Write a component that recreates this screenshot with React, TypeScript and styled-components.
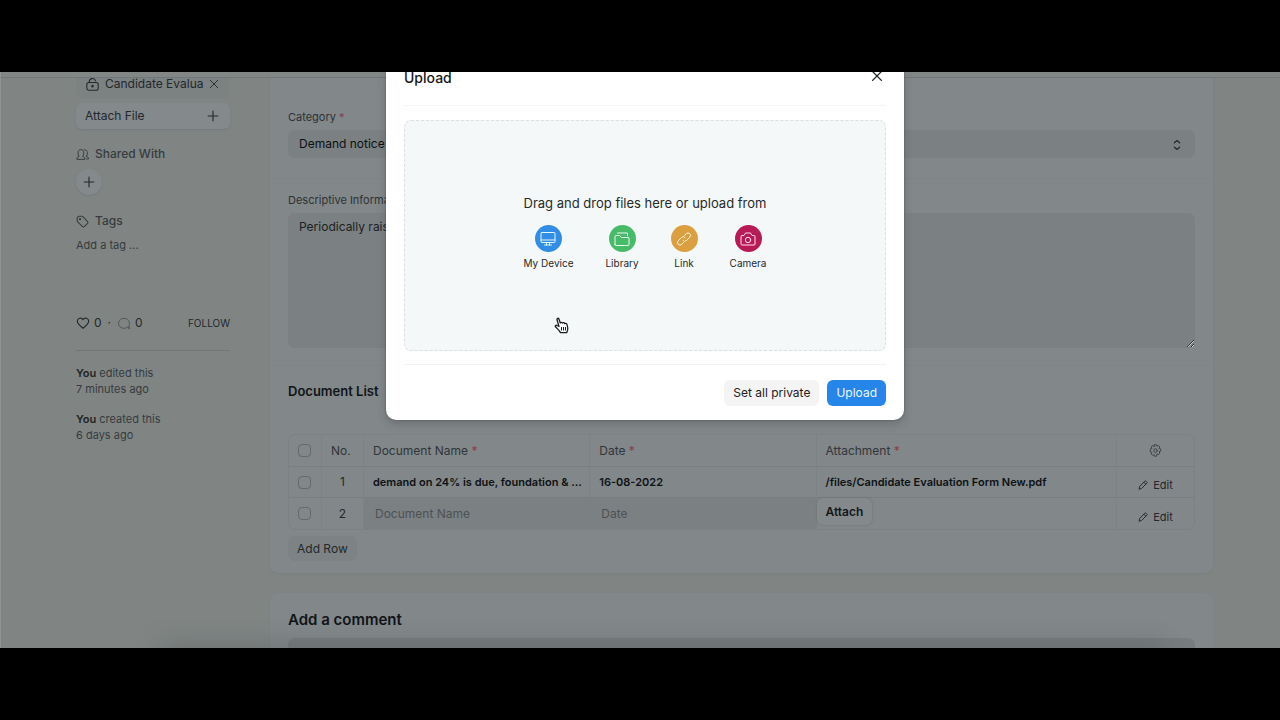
import React from "react";
import styled, { createGlobalStyle } from "styled-components";

const Global = createGlobalStyle`
  *, *::before, *::after { box-sizing: border-box; }
  body { margin: 0; background: #000; font-family: Inter, "Liberation Sans", sans-serif; font-size: 12px; line-height: 16px; color: #23282b; }
  button, input, select, textarea { font: inherit; color: inherit; margin: 0; }
  button { cursor: pointer; }
  h2, h3, p { margin: 0; }
`;

const Screen = styled.div`
  height: 100vh;
  padding: 72px 0;
  display: flex;
  flex-direction: column;
`;
const Stage = styled.div`
  position: relative;
  flex: 1;
  min-height: 0;
  overflow: hidden;
  background: #808584;
  border-left: 1px solid #8f9493;
`;
const Topbar = styled.header`
  height: 6px;
  background: #828786;
  border-bottom: 1px solid #727779;
`;
const Columns = styled.div`
  display: flex;
  gap: 40px;
  padding: 0 67px 0 75px;
`;
const Sidebar = styled.aside`
  flex: 0 0 154px;
  min-width: 0;
  display: flex;
  flex-direction: column;
`;
const AttachedFile = styled.div`
  display: flex;
  align-items: center;
  gap: 6px;
  height: 20px;
  padding: 0 10px 8px;
  margin-bottom: 5px;
  border-radius: 0 0 6px 6px;
  background: #7c8182;
`;
const FileName = styled.a`
  flex: 1;
  min-width: 0;
  color: inherit;
  text-decoration: none;
  white-space: nowrap;
`;
const IconButton = styled.button`
  display: flex;
  padding: 0;
  border: 0;
  background: none;
`;
const AttachButton = styled.button`
  display: flex;
  align-items: center;
  justify-content: space-between;
  height: 26px;
  padding: 0 10px 0 9px;
  border: 0;
  border-radius: 6px;
  background: #84898b;
  box-shadow: 0 1px 2px #737879;
`;
const SideHeading = styled.h3`
  display: flex;
  align-items: center;
  gap: 6px;
  margin-top: 17px;
  font-size: 12px;
  font-weight: 500;
  color: #363c3f;
`;
const RoundButton = styled.button`
  display: flex;
  align-items: center;
  justify-content: center;
  width: 26px;
  height: 26px;
  margin: 7px 0 1px;
  padding: 0;
  border: 0;
  border-radius: 50%;
  background: #84898b;
  box-shadow: 0 1px 2px #737879;
`;
const TagInput = styled.input`
  width: 100%;
  height: 16px;
  margin-top: 8px;
  padding: 0;
  border: 0;
  background: none;
  font-size: 11px;
  &::placeholder { color: #353b3e; opacity: 1; }
`;
const Social = styled.div`
  display: flex;
  align-items: center;
  gap: 4px;
  height: 20px;
  margin-top: 60px;
`;
const Separator = styled.span`
  margin: 0 2px;
`;
const Follow = styled.button`
  margin-left: auto;
  padding: 0;
  border: 0;
  background: none;
  font-size: 10px;
`;
const Rule = styled.hr`
  width: 100%;
  margin: 17px 0 14px;
  border: 0;
  border-top: 1px solid #717677;
`;
const Activity = styled.p`
  margin-bottom: 14px;
  font-size: 11px;
  color: #353b3e;
  b { font-weight: 600; color: #1e2326; }
`;

const Main = styled.main`
  flex: 1;
  min-width: 0;
  display: flex;
  flex-direction: column;
  gap: 20px;
`;
const Card = styled.section`
  background: #828789;
  border-radius: 0 0 8px 8px;
  box-shadow: 0 1px 2px #787d7e;
  padding-bottom: 12px;
`;
const CommentCard = styled.section`
  height: 120px;
  padding: 17px 18px;
  border-radius: 8px;
  background: #828789;
  box-shadow: 0 0 2px #7b8081;
`;
const Section = styled.div`
  display: flex;
  flex-direction: column;
  padding: ${(p: { $top: number; $bottom: number }) => `${p.$top}px 18px ${p.$bottom}px`};
  & + & { border-top: 1px solid #7f8486; }
`;
const Label = styled.label`
  height: 16px;
  margin-bottom: 5px;
  font-size: 11px;
  color: #2c3235;
`;
const Required = styled.span`
  color: #873f46;
`;
const SelectWrap = styled.div`
  position: relative;
  svg { position: absolute; right: 12px; top: 9px; pointer-events: none; }
`;
const Select = styled.select`
  appearance: none;
  width: 100%;
  height: 28px;
  padding: 0 11px;
  border: 0;
  border-radius: 7px;
  background: #7b8082;
  color: #0b1013;
`;
const TextArea = styled.textarea`
  display: block;
  width: 100%;
  height: 135px;
  padding: 6px 11px;
  border: 0;
  border-radius: 7px;
  background: #7b8082;
  resize: vertical;
  outline: none;
  color: #1b2023;
`;
const Heading = styled.h2`
  font-size: ${(p: { $size: number }) => p.$size}px;
  line-height: 20px;
  font-weight: 600;
  color: #101518;
`;
const Table = styled.table`
  width: 100%;
  margin-top: 33px;
  table-layout: fixed;
  border-collapse: separate;
  border-spacing: 0;
  border: 1px solid #7c8183;
  border-radius: 7px;
  th, td {
    height: 31px;
    padding: 0 9px;
    text-align: left;
    font-weight: 400;
    border-right: 1px solid #7d8284;
    white-space: nowrap;
  }
  th { color: #303639; }
  tbody td { border-top: 1px solid #797e80; }
  th:last-child, td:last-child { border-right: 0; }
`;
const Col = styled.col`
  width: ${(p: { $w: string }) => p.$w};
`;
const CheckCell = styled.td`
  && { padding: 0; text-align: center; }
`;
const Center = styled.div`
  display: flex;
  align-items: center;
  justify-content: center;
`;
const Check = styled.input`
  appearance: none;
  width: 13px;
  height: 13px;
  margin: 0 2px 0 0;
  border: 1px solid #64696b;
  border-radius: 4px;
`;
const ValueCell = styled.td`
  && { font-size: 11px; font-weight: 600; color: #0d1215; }
`;
const InputCell = styled.td`
  && { padding: 0; border-right: 0; background: #7b8082; }
`;
const CellInput = styled.input`
  display: block;
  width: 100%;
  height: 31px;
  padding: 0 11px;
  border: 0;
  background: none;
  &::placeholder { color: #4c5254; opacity: 1; }
`;
const AttachCell = styled.td`
  && { padding: 0 0 4px; }
`;
const CellAttach = styled.button`
  height: 27px;
  padding: 0 9px;
  border: 0;
  border-radius: 6px;
  background: #84898b;
  box-shadow: 0 0 2px #656a6c;
  font-weight: 600;
  color: #12171a;
`;
const EditButton = styled.button`
  display: flex;
  align-items: center;
  gap: 5px;
  margin: 6px auto 0;
  padding: 0;
  border: 0;
  background: none;
  font-size: 11px;
`;
const AddRow = styled.button`
  align-self: flex-start;
  height: 25px;
  margin-top: 6px;
  padding: 0 9px;
  border: 0;
  border-radius: 7px;
  background: #7d8284;
`;
const CommentBox = styled.textarea`
  display: block;
  width: 100%;
  height: 60px;
  margin-top: 8px;
  border: 0;
  border-radius: 7px;
  background: #777c7e;
  resize: none;
`;
const BottomShade = styled.div`
  position: absolute;
  left: 160px;
  right: 120px;
  bottom: -12px;
  height: 12px;
  box-shadow: 0 0 24px 2px rgba(70, 75, 78, 0.4);
`;

const ModalLayer = styled.div`
  position: absolute;
  inset: 0;
  padding-left: 9px;
  display: flex;
  justify-content: center;
  align-items: flex-start;
`;
const Modal = styled.div`
  width: 518px;
  background: #fff;
  border-radius: 0 0 10px 10px;
  box-shadow: 0 0 2px #4e5355, 0 4px 8px rgba(60, 65, 68, 0.3);
`;
const ModalHeader = styled.div`
  display: flex;
  align-items: flex-start;
  justify-content: space-between;
  height: 34px;
  margin: 0 18px;
  border-bottom: 1px solid #f5f5f5;
`;
const ModalTitle = styled.h2`
  font-size: 14px;
  line-height: 12px;
  font-weight: 500;
  color: #171717;
`;
const CloseButton = styled(IconButton)`
  width: 14px;
  height: 8px;
  align-items: center;
  justify-content: center;
  margin-right: 2px;
`;
const DropZone = styled.div`
  height: 231px;
  margin: 14px 18px 13px;
  padding-top: 72px;
  border: 1px dashed #dcdfdf;
  border-radius: 7px;
  background: #f5f8f8;
  color: #252a2a;
  text-align: center;
`;
const DropText = styled.p`
  font-size: 13px;
  line-height: 20px;
`;
const Sources = styled.div`
  display: flex;
  justify-content: center;
  gap: 32px;
  margin-top: 12px;
`;
const Source = styled.button`
  display: flex;
  flex-direction: column;
  align-items: center;
  gap: 3px;
  padding: 0;
  border: 0;
  background: none;
  font-size: 10px;
  color: #25292c;
`;
const Dot = styled.span`
  display: flex;
  align-items: center;
  justify-content: center;
  width: 27px;
  height: 27px;
  border-radius: 50%;
  background: ${(p: { $color: string }) => p.$color};
`;
const ModalFooter = styled.div`
  display: flex;
  justify-content: flex-end;
  gap: 8px;
  margin: 0 18px;
  padding: 15px 0 14px;
  border-top: 1px solid #f3f3f3;
`;
const Button = styled.button`
  height: 26px;
  padding: 0 9px;
  border: 0;
  border-radius: 6px;
  background: ${(p: { $primary?: boolean }) => (p.$primary ? "#2585e8" : "#f4f4f5")};
  color: ${(p: { $primary?: boolean }) => (p.$primary ? "#eef7ff" : "#1f2123")};
`;
const Pointer = styled.svg`
  position: absolute;
  left: 553px;
  top: 245px;
`;

type IconProps = { size?: number; width?: number; color?: string; children: React.ReactNode };
const Icon = ({ size = 16, width = 1, color = "currentColor", children }: IconProps) => (
  <svg width={size} height={size} viewBox="0 0 16 16" fill="none" stroke={color} strokeWidth={width} strokeLinecap="round" strokeLinejoin="round" aria-hidden="true">
    {children}
  </svg>
);
const Plus = () => <Icon size={14} width={1.3}><path d="M8 2.5v11M2.5 8h11" /></Icon>;
const Cross = ({ size, width }: { size: number; width: number }) => <Icon size={size} width={width}><path d="M3 3l10 10M13 3L3 13" /></Icon>;
const Pencil = () => <Icon size={10} width={1.5}><path d="M1.8 14.2l1-4.2 7.8-7.8a1.8 1.8 0 0 1 2.6 0l.6.6a1.8 1.8 0 0 1 0 2.6L6 13.2zM9.3 3.6l3.1 3.1" /></Icon>;

const rows = [
  { no: 1, name: "demand on 24% is due, foundation & ...", date: "16-08-2022", file: "/files/Candidate Evaluation Form New.pdf" },
];

export default function App() {
  return (
    <Screen>
      <Global />
      <Stage>
        <Topbar />
        <Columns>
          <Sidebar>
            <AttachedFile>
              <Icon size={13} width={1.3}><rect x="1" y="5.5" width="14" height="9.5" rx="2.5" /><path d="M4 5.5V5a4 4 0 0 1 7.8-1.5" /><circle cx="8" cy="10" r=".9" fill="currentColor" /></Icon>
              <FileName href="#file">Candidate Evalua</FileName>
              <IconButton aria-label="Remove file"><Cross size={12} width={1.2} /></IconButton>
            </AttachedFile>
            <AttachButton>Attach File<Plus /></AttachButton>
            <SideHeading>
              <Icon size={13} width={1.2}><path d="M1 13.5c0-2 1-2.5 2.800-3C2.800 9.500 2.500 8 2.500 6 2.500 3.500 4 2 6 2s3.500 1.500 3.500 4c0 2-.3 3.500-1.300 4.500 1.800.5 2.800 1 2.800 3zM10 2.200c2-.4 4 1.200 4 3.800 0 2-.5 3.500-1.500 4.500 2 .5 3 1 3 3h-2.500" /></Icon>
              Shared With
            </SideHeading>
            <RoundButton aria-label="Share"><Plus /></RoundButton>
            <SideHeading>
              <Icon size={13} width={1.3}><path d="M1.500 4a2.500 2.500 0 0 1 2.500-2.500h3a2 2 0 0 1 1.500.6L14 7.700a2 2 0 0 1 0 2.800L10.500 14a2 2 0 0 1-2.800 0L2.100 8.500A2 2 0 0 1 1.500 7z" /><circle cx="5" cy="5" r=".8" /></Icon>
              Tags
            </SideHeading>
            <TagInput aria-label="Add a tag" placeholder="Add a tag ..." />
            <Social>
              <Icon size={14} width={1.3}><path d="M8 14C4 11 1.500 9 1.500 6A3.500 3.500 0 0 1 8 4.200 3.500 3.500 0 0 1 14.500 6c0 3-2.500 5-6.500 8z" /></Icon>
              <span>0</span><Separator>·</Separator>
              <Icon size={14} width={1} color="#4c5254"><path d="M12.500 12.500a6.300 5.800 0 1 1 1.300-1.800L14 14.500z" /></Icon>
              <span>0</span>
              <Follow>FOLLOW</Follow>
            </Social>
            <Rule />
            <Activity><b>You</b> edited this<br />7 minutes ago</Activity>
            <Activity><b>You</b> created this<br />6 days ago</Activity>
          </Sidebar>
          <Main>
            <Card>
              <Section $top={31} $bottom={20}>
                <Label htmlFor="category">Category <Required>*</Required></Label>
                <SelectWrap>
                  <Select id="category"><option>Demand notice</option></Select>
                  <Icon size={12} width={1.6}><path d="M4.500 5 8 2l3.500 3M4.500 11 8 14l3.500-3" /></Icon>
                </SelectWrap>
              </Section>
              <Section $top={13} $bottom={17}>
                <Label htmlFor="info">Descriptive Information</Label>
                <TextArea id="info" defaultValue="Periodically raised" />
              </Section>
              <Section $top={15} $bottom={0}>
                <Heading $size={13}>Document List</Heading>
                <Table>
                  <colgroup>
                    <Col $w="33px" /><Col $w="42px" /><Col $w="25%" /><Col $w="25%" /><Col $w="auto" /><Col $w="77px" />
                  </colgroup>
                  <thead>
                    <tr>
                      <CheckCell as="th"><Center><Check type="checkbox" aria-label="Select all" /></Center></CheckCell>
                      <th>No.</th>
                      <th>Document Name <Required>*</Required></th>
                      <th>Date <Required>*</Required></th>
                      <th>Attachment <Required>*</Required></th>
                      <th><Center><Icon size={13} width={1.2} color="#3f4547"><circle cx="8" cy="8" r="2.2" /><path d="M6.700 1h2.600l.5 1.900 1.800-1 1.800 1.800-1 1.800 2 .6v2.700l-2 .5 1 1.900-1.800 1.800-1.800-1L9.300 15H6.700l-.5-2-1.800 1-1.800-1.800 1-1.900-2-.5V6.100l2-.6-1-1.800 1.800-1.800 1.800 1z" /></Icon></Center></th>
                    </tr>
                  </thead>
                  <tbody>
                    {rows.map((r) => (
                      <tr key={r.no}>
                        <CheckCell><Center><Check type="checkbox" aria-label={`Select row ${r.no}`} /></Center></CheckCell>
                        <CheckCell>{r.no}</CheckCell>
                        <ValueCell>{r.name}</ValueCell>
                        <ValueCell>{r.date}</ValueCell>
                        <ValueCell>{r.file}</ValueCell>
                        <td><EditButton><Pencil />Edit</EditButton></td>
                      </tr>
                    ))}
                    <tr>
                      <CheckCell><Center><Check type="checkbox" aria-label="Select row 2" /></Center></CheckCell>
                      <CheckCell>2</CheckCell>
                      <InputCell><CellInput aria-label="Document Name" placeholder="Document Name" /></InputCell>
                      <InputCell><CellInput aria-label="Date" placeholder="Date" /></InputCell>
                      <AttachCell><CellAttach>Attach</CellAttach></AttachCell>
                      <td><EditButton><Pencil />Edit</EditButton></td>
                    </tr>
                  </tbody>
                </Table>
                <AddRow>Add Row</AddRow>
              </Section>
            </Card>
            <CommentCard>
              <Heading $size={15}>Add a comment</Heading>
              <CommentBox aria-label="Comment" />
            </CommentCard>
          </Main>
        </Columns>
        <BottomShade />
        <ModalLayer>
          <Modal role="dialog" aria-label="Upload">
            <ModalHeader>
              <ModalTitle>Upload</ModalTitle>
              <CloseButton aria-label="Close"><Cross size={14} width={1.6} /></CloseButton>
            </ModalHeader>
            <DropZone>
              <DropText>Drag and drop files here or upload from</DropText>
              <Sources>
                <Source><Dot $color="#318ee4"><Icon color="#e4f7ff"><rect x="1" y="1.5" width="14" height="10" rx="1" /><path d="M1 9h14M6.500 11.500V14M9.500 11.500V14M4.500 14h7" /></Icon></Dot>My Device</Source>
                <Source><Dot $color="#48bb69"><Icon color="#e6fff0"><path d="M1 13.500V5.500a1 1 0 0 1 1-1h3.500L7.500 6.500h6.500a1 1 0 0 1 1 1v6a1 1 0 0 1-1 1H2a1 1 0 0 1-1-1zM3.500 2h10v2.500" /></Icon></Dot>Library</Source>
                <Source><Dot $color="#dc9f3f"><Icon color="#fff6dd"><path d="M7.500 11.500 5.700 13.300a2.400 2.400 0 0 1-3.500-3.400L5.500 6.500a2.400 2.400 0 0 1 3.500 0M8.500 4.500l1.800-1.800A2.400 2.400 0 0 1 13.800 6.100L10.500 9.500a2.400 2.400 0 0 1-3.500 0" /></Icon></Dot>Link</Source>
                <Source><Dot $color="#b81a55"><Icon color="#ffe2ee"><path d="M1 5.500a1 1 0 0 1 1-1h2L5.500 2h5L12 4.500h2a1 1 0 0 1 1 1V13a1 1 0 0 1-1 1H2a1 1 0 0 1-1-1z" /><circle cx="8" cy="9" r="2.7" /></Icon></Dot>Camera</Source>
              </Sources>
            </DropZone>
            <ModalFooter>
              <Button>Set all private</Button>
              <Button $primary>Upload</Button>
            </ModalFooter>
          </Modal>
        </ModalLayer>
        <Pointer width="16" height="17" viewBox="0 0 16 17" fill="#fff" stroke="#1c1f20" strokeWidth="1.3" strokeLinejoin="round" aria-hidden="true">
          <path d="M5 9.500 3 2.800C2.600 1.200 4.500.700 5 2.200L6.300 6c.3-1 1.900-.9 2.200.2.500-.9 2-.6 2.200.5.700-.8 2.100-.3 2.300.9l.7 3c.4 2-.2 3.400-1 5H6.500C5.500 13.500 3.500 12 1.500 9.800c-.8-1.200.5-2 1.500-1.300z" />
          <path d="M7.500 10v3.500M9.500 10v3.500M11.500 10v3.500" strokeWidth="1" />
        </Pointer>
      </Stage>
    </Screen>
  );
}
